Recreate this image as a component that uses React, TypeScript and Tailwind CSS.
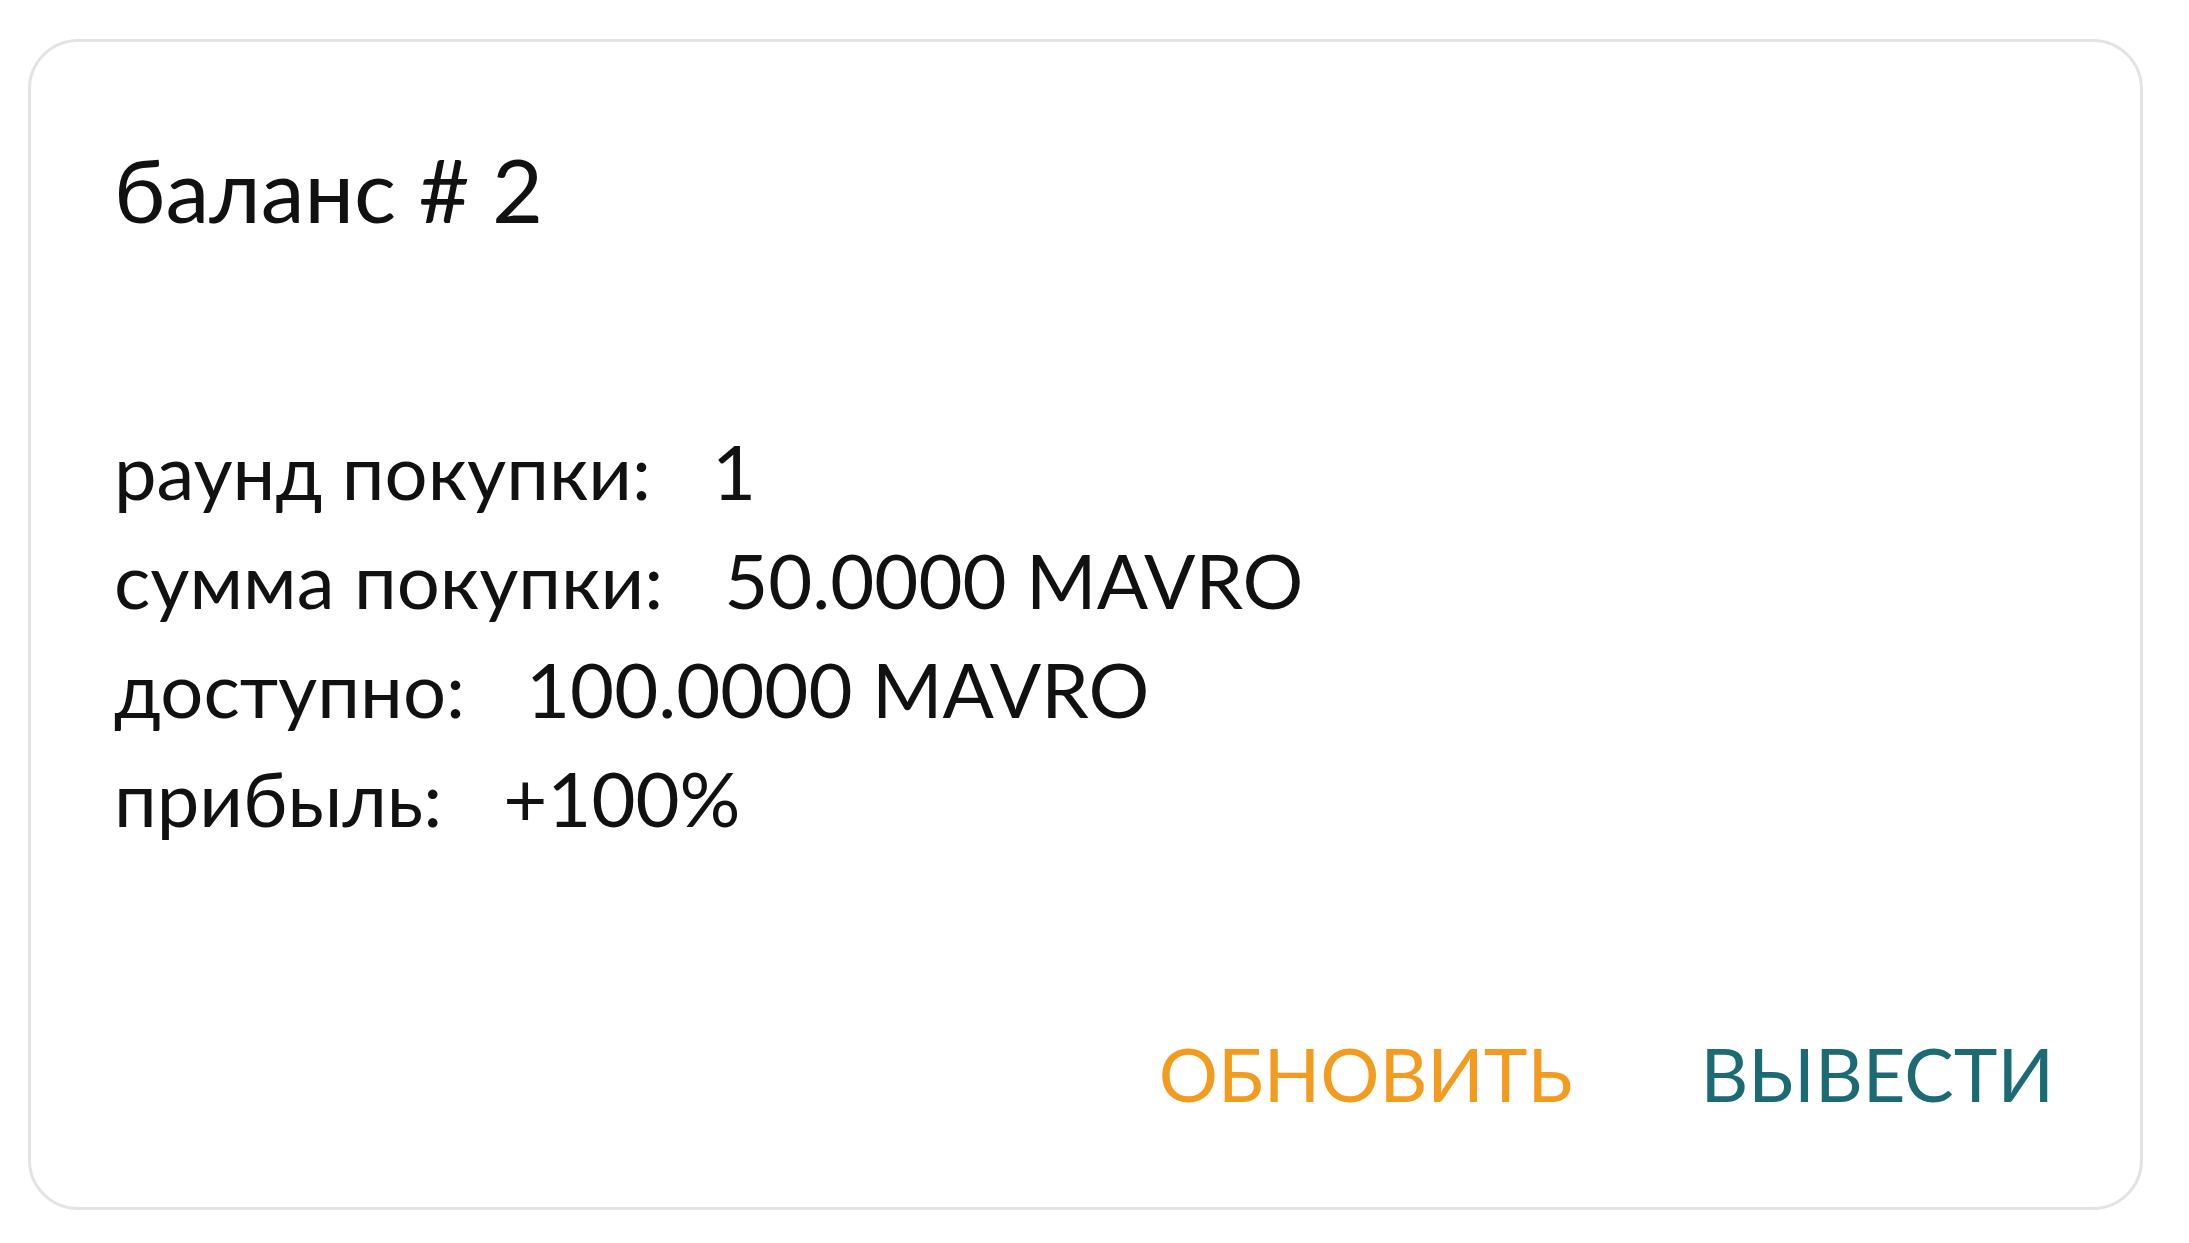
import React from 'react';

const rows = [
  { label: 'раунд покупки:', value: '1' },
  { label: 'сумма покупки:', value: '50.0000 MAVRO' },
  { label: 'доступно:', value: '100.0000 MAVRO' },
  { label: 'прибыль:', value: '+100%' },
];

export default function App() {
  return (
    <div className="min-h-[1243px] w-full bg-white pl-[28px] pt-[39px] font-['Lato','Noto_Sans',sans-serif] text-[#111]">
      <div className="flex h-[1171px] w-[2115px] flex-col rounded-[50px] border-[3px] border-[#e3e3e3] bg-white pl-[83px] pr-[86px]">
        <h2 className="mt-[103px] text-[88px] leading-[88px] font-normal">баланс # 2</h2>

        <div className="mt-[183px] flex flex-col">
          {rows.map(row => (
            <div key={row.label} className="flex text-[76px] leading-[109px]">
              <span>{row.label}</span>
              <span className="ml-[61px]">{row.value}</span>
            </div>
          ))}
        </div>

        <div className="mt-auto mb-[96px] flex justify-end gap-[128px] text-[74px] leading-[74px]">
          <button className="uppercase text-[#f39b1e]">Обновить</button>
          <button className="uppercase text-[#1c6a73]">Вывести</button>
        </div>
      </div>
    </div>
  );
}
